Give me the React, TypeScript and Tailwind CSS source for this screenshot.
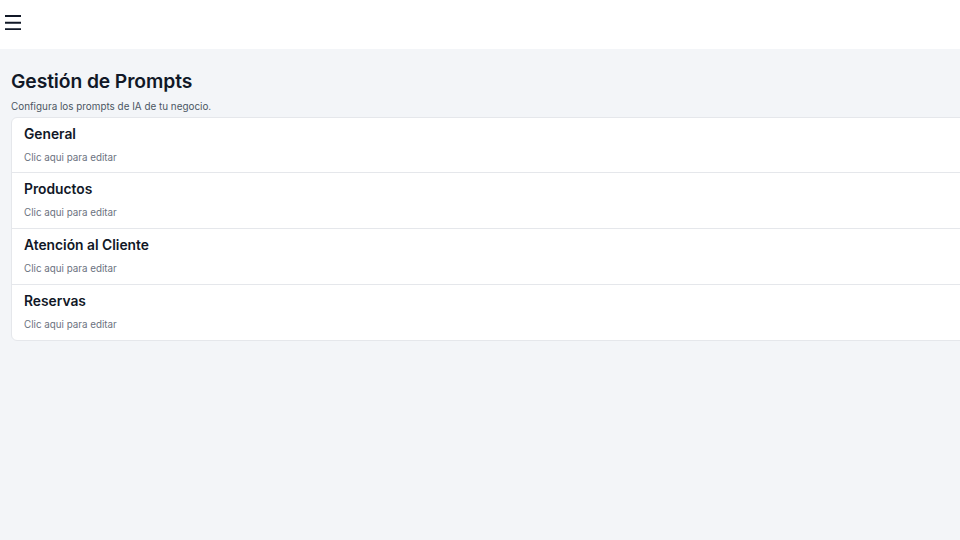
const prompts = ["General", "Productos", "Atención al Cliente", "Reservas"];

export default function App() {
  return (
    <div className="h-[540px] w-[960px] overflow-hidden bg-[#f3f5f8] font-['Inter',sans-serif] text-[#111827]">
      <header className="h-[49px] bg-white pl-[5px] pt-[15px]">
        <svg width="16" height="15" viewBox="0 0 16 15" fill="none" stroke="#111827" strokeWidth="2">
          <path d="M0 1h16M0 7.7h16M0 14.3h16" />
        </svg>
      </header>

      <main className="pl-[11px] pt-[20px]">
        <h1 className="text-[19.3px] font-semibold leading-[25px] tracking-[-0.1px]">Gestión de Prompts</h1>
        <p className="mt-[6px] text-[9.9px] leading-[13px] text-[#4b5563]">Configura los prompts de IA de tu negocio.</p>

        <div className="mt-[4px] w-[1000px] rounded-md border border-[#e5e7eb] bg-white">
          {prompts.map((name, i) => (
            <div key={name} className={`px-[12px] pt-[7px] ${i > 0 ? "h-[56px] border-t border-[#e5e7eb]" : "h-[54px] pt-[6px]"}`}>
              <h3 className="text-[13.8px] font-semibold leading-[18px]">{name}</h3>
              <p className="mt-[8px] text-[9.8px] leading-[13px] text-[#6b7280]">Clic aqui para editar</p>
            </div>
          ))}
        </div>
      </main>
    </div>
  );
}
